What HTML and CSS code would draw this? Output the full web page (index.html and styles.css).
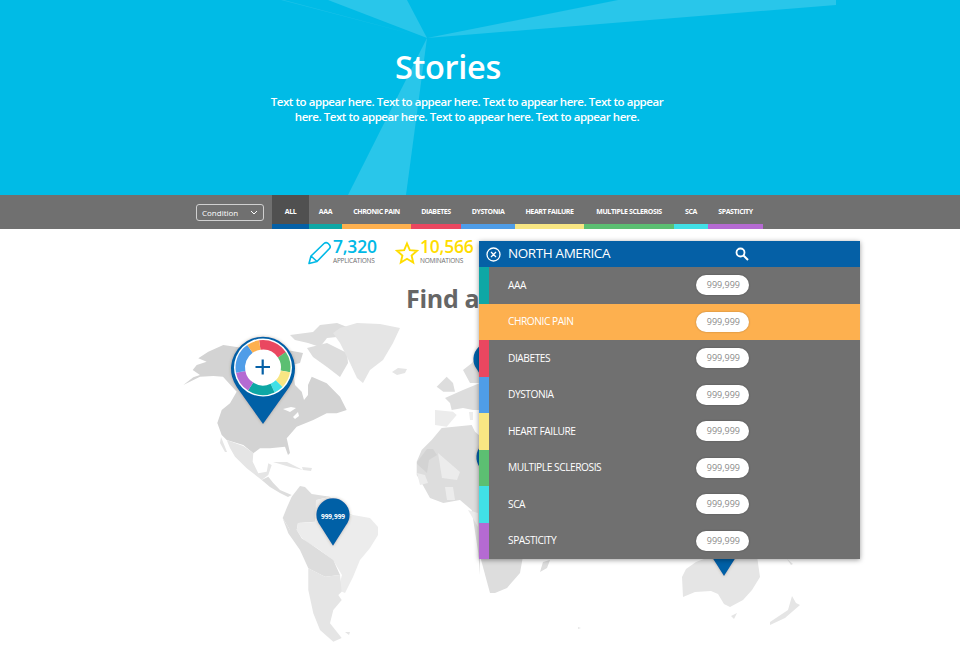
FILE: index.html
```html
<!DOCTYPE html>
<html lang="en">
<head>
<meta charset="utf-8">
<title>Stories</title>
<link rel="stylesheet" href="styles.css">
</head>
<body>
<header class="hero">
  <svg class="hero-facets" viewBox="0 0 960 195" width="960" height="195" aria-hidden="true">
    <polygon points="328,0 407,0 427,38"/>
    <polygon points="618,0 836,0 836,5 427,38"/>
    <polygon class="facet-thin" points="281,0 284,0 427,38"/>
    <polygon points="427,38 348,195 406,195"/>
  </svg>
  <div class="hero-copy">
    <h1>Stories</h1>
    <p>Text to appear here. Text to appear here. Text to appear here. Text to appear here. Text to appear here. Text to appear here. Text to appear here.</p>
  </div>
</header>

<nav class="filter-bar">
  <div class="select">
    <span>Condition</span>
    <svg width="8" height="5" viewBox="0 0 8 5"><path d="M1 1l3 3 3-3" fill="none" stroke="#fff" stroke-width="1"/></svg>
  </div>
  <ul class="tabs">
    <li class="tab tab-all">ALL</li>
    <li class="tab tab-aaa">AAA</li>
    <li class="tab tab-chronic">CHRONIC PAIN</li>
    <li class="tab tab-diabetes">DIABETES</li>
    <li class="tab tab-dystonia">DYSTONIA</li>
    <li class="tab tab-heart">HEART FAILURE</li>
    <li class="tab tab-ms">MULTIPLE SCLEROSIS</li>
    <li class="tab tab-sca">SCA</li>
    <li class="tab tab-spasticity">SPASTICITY</li>
  </ul>
</nav>

<main class="content">
  <svg class="map" viewBox="0 229 960 419" width="960" height="419" aria-hidden="true">
    <defs>
      <filter id="pinShadow" x="-30%" y="-30%" width="160%" height="160%">
        <feDropShadow dx="0" dy="0" stdDeviation="1.500" flood-color="#5a4a2a" flood-opacity=".35"/>
      </filter>
    </defs>
    <!-- North America -->
    <polygon class="land-d" points="183.300,385 193.300,377.300 200,375 192.700,370 196.700,365 206.700,361.700 198.300,358.300 208.300,351.700 223.300,345 235,346.700 260,350 285,358 293,370 295,385 301.700,391.700 304,400 308,395 308,385 311.700,376.700 326.700,383.300 340,396.700 346.700,410 336.700,413.300 326.700,413.300 313.300,420 296.700,426.700 286.700,438.300 290,453 288,455 285,446.700 270,448.300 260,448.300 253.300,453.300 243.300,445 226.700,440 221.700,435 217.300,423 221.700,410 230,403.300 236.700,391.700 223,376.700 213.300,376 200,376.700"/>
    <polygon class="map-white" points="283,409 291,407 296,408 290,412"/>
    <polygon class="map-white" points="293,417 298,412 299,416 295,419"/>
    <polygon class="land-m" points="290,335 313,332 320,325 337,323 347,327 337,337 327,338 320,347 308,343 295,340"/>
    <polygon class="land-m" points="307,348 327,343 347,353 348,363 340,377 327,367 313,357"/>
    <polygon class="land-d" points="287,350 303,353 300,363 292,365"/>
    <polygon class="land-p" points="333,333 340,328 357,323 380,324 400,328 393,343 383,360 370,370 363,383 357,378 350,363 340,343"/>
    <polygon class="land-p" points="392,372 398,368 407,369 405,373 397,375"/>
    <!-- Mexico, Central America, Caribbean -->
    <polygon class="land-p" points="226.700,440 243.300,446 253.300,453 252.700,461.700 258.300,473.300 266.700,471.700 268.300,463.300 271.700,465 268.300,475 261.700,480 246.700,468.300 235,456.700 230,448"/>
    <polygon class="land-p" points="221,437 227,452 225,452 220,443"/>
    <polygon class="land-m" points="261.700,480 268.300,476.700 273.300,483 280,490 291.700,495 288,497 280,493 270,487"/>
    <polygon class="land-p" points="273,462 287,462 297,467 303,470 290,467"/>
    <polygon class="land-p" points="302,467 312,468 311,471 303,470"/>
    <!-- South America -->
    <polygon class="land-m" points="291.700,496.700 300,486 305,487 311.700,494 330,496.700 316.700,500 315,521.700 298,523 296.700,530 290,530 282.700,518 286.700,508"/>
    <polygon class="land-l" points="296.700,530 298,523 315,522 353,515 370,518 378,527 378,535 370,548 360,560 353,577 345,593 338,590 342,575 333,560 317,548 308,543 302,538"/>
    <polygon class="land-l" points="316,500 330,497 346,512 353,515 315,522"/>
    <polygon class="land-m" points="282.700,518.300 290,530 296.700,530 301.700,538.300 316.700,548.300 333.300,560 340,575 325,576.700 308.300,568.300 300,550 288.300,533.300"/>
    <polygon class="land-p" points="308.300,568.300 325,576.700 340,575 341.700,591.700 338.300,595 341.700,600 333.300,610 330,623.300 341.700,638 333.300,641.700 320,630 313.300,613.300 308.300,590"/>
    <polygon class="land-p" points="345,632 350,632 349,635"/>
    <!-- Europe -->
    <polygon class="land-m" points="436.700,386.700 446.700,376.700 453,383 455,391.700 443.300,391.700"/>
    <polygon class="land-l" points="435,410 453,411.700 456.700,415 446.700,426.700 435,425"/>
    <polygon class="land-m" points="445,398 463,390 480,383 480,410 473,410 463,408 451.700,410 450,403"/>
    <polygon class="land-m" points="463,370 472,363 480,353 480,383 470,383"/>
    <polygon class="land-l" points="469,412 473,412 473,420 470,420"/>
    <!-- Africa -->
    <polygon class="land-m" points="416.700,461.700 421.700,450 431.700,440 441.700,428 471.700,425 475,431.700 480,436 480,575 478.300,553 471.700,510 460,500 443.300,503 430,498 421.700,483 416.700,475"/>
    <polygon class="land-d" points="417,462 427,449 433,449 437,455 429,460 427,473 417,464"/>
    <polygon class="land-l" points="438,453 460,472 457,480 442,478"/>
    <polygon class="land-l" points="417,473 425,475 428,483 420,485"/>
    <polygon class="land-l" points="445,487 453,487 455,500 447,500"/>
    <polygon class="land-l" points="468,510 478,513 478,527"/>
    <polygon class="land-m" points="480,556 490,593 495,593 507,588 520,573 523,556"/>
    <polygon class="land-m" points="540,572 543,562 550,560 547,568"/>
    <!-- Australia and Oceania -->
    <polygon class="land-p" points="682,577 686,569 696,562 712,556 757,556 760,577 752,590 743,600 730,607 724,604 718,594 711,591 695,592 683,597"/>
    <polygon class="land-p" points="731,616 737,613 734,619"/>
    <polygon class="land-p" points="792,596 796,603 800,605 785,618 770,625 770,622 788,610"/>
    <polygon class="land-p" points="787,559 793,564 791,565"/>
    <polygon class="land-p" points="578,627 581,628 578,629"/>
    <!-- Pins -->
    <g class="pin" filter="url(#pinShadow)">
      <path d="M263 424l-26-36.600a32 32 0 1 1 52 0z"/>
    </g>
    <circle class="pin-halo" cx="263" cy="367.500" r="29"/>
    <g class="donut">
      <circle class="seg-red" cx="263" cy="367.500" r="22.750" pathLength="360" stroke-dasharray="64 360" transform="rotate(-98 263 367.500)"/>
      <circle class="seg-green" cx="263" cy="367.500" r="22.750" pathLength="360" stroke-dasharray="44 360" transform="rotate(-34 263 367.500)"/>
      <circle class="seg-yellow" cx="263" cy="367.500" r="22.750" pathLength="360" stroke-dasharray="35 360" transform="rotate(10 263 367.500)"/>
      <circle class="seg-cyan" cx="263" cy="367.500" r="22.750" pathLength="360" stroke-dasharray="20 360" transform="rotate(45 263 367.500)"/>
      <circle class="seg-teal" cx="263" cy="367.500" r="22.750" pathLength="360" stroke-dasharray="58 360" transform="rotate(65 263 367.500)"/>
      <circle class="seg-purple" cx="263" cy="367.500" r="22.750" pathLength="360" stroke-dasharray="46 360" transform="rotate(123 263 367.500)"/>
      <circle class="seg-blue" cx="263" cy="367.500" r="22.750" pathLength="360" stroke-dasharray="66 360" transform="rotate(169 263 367.500)"/>
      <circle class="seg-orange" cx="263" cy="367.500" r="22.750" pathLength="360" stroke-dasharray="27 360" transform="rotate(235 263 367.500)"/>
    </g>
    <path class="plus" d="M255.500 367h14.500M262.700 359.500v15"/>
    <g class="pin" filter="url(#pinShadow)">
      <path d="M333 545.700l-13-20.500a16.600 16.600 0 1 1 26 0z"/>
      <path d="M724 576l-13-20.500a16.600 16.600 0 1 1 26 0z"/>
      <path d="M490 390l-13-20.500a16.600 16.600 0 1 1 26 0z"/>
      <path d="M493 488l-13-20.500a16.600 16.600 0 1 1 26 0z"/>
    </g>
    <text class="pin-label" x="333" y="519">999,999</text>
  </svg>

  <section class="stats">
    <div class="stat">
      <svg width="24" height="24" viewBox="0 0 24 24"><path d="M1 22.500L3 15 16 2.500q2-1.700 4-.2L21.500 4q1.500 2 0 3.500L9 20.500zM3 15l6 5.500" fill="none" stroke="#00b9e6" stroke-width="1.600" stroke-linejoin="round"/></svg>
      <div class="stat-text">
        <strong class="stat-num stat-num-blue">7,320</strong>
        <span class="stat-label">APPLICATIONS</span>
      </div>
    </div>
    <div class="stat">
      <svg width="24" height="24" viewBox="0 0 24 24"><path d="M12 2.500l2.800 6.600 7.200.7-5.400 4.700 1.600 7-6.200-3.700-6.200 3.700 1.600-7L2 9.800l7.200-.7z" fill="none" stroke="#ffdd00" stroke-width="1.900"/></svg>
      <div class="stat-text">
        <strong class="stat-num stat-num-yellow">10,566</strong>
        <span class="stat-label">NOMINATIONS</span>
      </div>
    </div>
  </section>
  <h2 class="find">Find a</h2>

  <aside class="panel">
    <div class="panel-head">
      <svg width="15" height="15" viewBox="0 0 15 15"><circle cx="7.500" cy="7.500" r="6.500" fill="none" stroke="#fff" stroke-width="1.300"/><path d="M5 5l5 5M10 5l-5 5" stroke="#fff" stroke-width="1.300"/></svg>
      <span class="panel-title">NORTH AMERICA</span>
      <svg class="panel-search" width="14" height="14" viewBox="0 0 14 14"><circle cx="5.500" cy="5.500" r="4" fill="none" stroke="#fff" stroke-width="1.800"/><path d="M8.500 8.500l4.500 4.500" stroke="#fff" stroke-width="2"/></svg>
    </div>
    <ul class="rows">
      <li class="row row-aaa"><span>AAA</span><b class="pill">999,999</b></li>
      <li class="row row-chronic"><span>CHRONIC PAIN</span><b class="pill">999,999</b></li>
      <li class="row row-diabetes"><span>DIABETES</span><b class="pill">999,999</b></li>
      <li class="row row-dystonia"><span>DYSTONIA</span><b class="pill">999,999</b></li>
      <li class="row row-heart"><span>HEART FAILURE</span><b class="pill">999,999</b></li>
      <li class="row row-ms"><span>MULTIPLE SCLEROSIS</span><b class="pill">999,999</b></li>
      <li class="row row-sca"><span>SCA</span><b class="pill">999,999</b></li>
      <li class="row row-spasticity"><span>SPASTICITY</span><b class="pill">999,999</b></li>
    </ul>
  </aside>
</main>
</body>
</html>
```
FILE: styles.css
```css
* { box-sizing: border-box; }
html, body { margin: 0; padding: 0; }
body {
  width: 960px;
  height: 648px;
  overflow: hidden;
  background: #fff;
  font-family: "Open Sans", "Noto Sans", sans-serif;
  color: #6e6e6e;
}
ul { list-style: none; margin: 0; padding: 0; }

/* Hero */
.hero {
  position: relative;
  height: 195px;
  background: #00bbe6;
  color: #fff;
  overflow: hidden;
}
.hero-facets { position: absolute; inset: 0; fill: #fff; fill-opacity: .16; }
.facet-thin { fill-opacity: .1; }
.hero-copy {
  position: relative;
  width: 400px;
  margin-left: 267px;
  padding-top: 45px;
  text-align: center;
}
.hero-copy h1 {
  margin: 0 38px 6px 0;
  font-size: 32.500px;
  line-height: 44px;
  font-weight: 600;
  letter-spacing: -.3px;
}
.hero-copy p {
  margin: 0;
  font-size: 11.500px;
  line-height: 14.500px;
  font-weight: 600;
  letter-spacing: -.45px;
}

/* Filter bar */
.filter-bar {
  display: flex;
  align-items: flex-start;
  height: 34px;
  background: #707070;
  padding: 8.500px 0 0 196px;
}
.select {
  display: flex;
  align-items: center;
  justify-content: space-between;
  width: 68px;
  height: 17px;
  padding: 0 5px;
  border: 1px solid #d0d0d0;
  border-radius: 3px;
  color: #fff;
  font-size: 8px;
}
.tabs { display: flex; height: 34px; margin: -8.500px 0 0 8px; }
.tab {
  display: flex;
  align-items: center;
  justify-content: center;
  height: 34px;
  padding-top: 3px;
  border-bottom: 5px solid;
  color: #fff;
  font-size: 7px;
  font-weight: 700;
  letter-spacing: -.4px;
  white-space: nowrap;
}
.tab-all { width: 37px; background: #505050; border-color: #0560a6; }
.tab-aaa { width: 33px; border-color: #0ea7a5; }
.tab-chronic { width: 69px; border-color: #fdb04f; }
.tab-diabetes { width: 50px; border-color: #ea4760; }
.tab-dystonia { width: 54px; border-color: #4f9de8; }
.tab-heart { width: 69px; border-color: #f8e683; }
.tab-ms { width: 90px; border-color: #5cbf72; }
.tab-sca { width: 34px; border-color: #41e0e6; }
.tab-spasticity { width: 55px; border-color: #b56ad2; }

/* Main */
.content { position: relative; height: 419px; }
.map { position: absolute; left: 0; top: 0; }
.land-d { fill: #d3d3d3; }
.land-m { fill: #dddddd; }
.land-p { fill: #e5e5e5; }
.land-l { fill: #ececec; }
.map-white { fill: #fff; }
.pin { fill: #0560a6; }
.pin-halo { fill: #fff; }
.donut circle { fill: none; stroke-width: 9.500; }
.seg-red { stroke: #ea4760; }
.seg-green { stroke: #5cbf72; }
.seg-yellow { stroke: #f8e683; }
.seg-cyan { stroke: #41e0e6; }
.seg-teal { stroke: #0ea7a5; }
.seg-purple { stroke: #b56ad2; }
.seg-blue { stroke: #4f9de8; }
.seg-orange { stroke: #fdb04f; }
.plus { fill: none; stroke: #0560a6; stroke-width: 2.200; }
.pin-label {
  fill: #fff;
  font-size: 6.500px;
  font-weight: 700;
  text-anchor: middle;
}

.stats {
  position: relative;
  display: flex;
  gap: 15px;
  padding: 12px 0 0 308px;
}
.stat { display: flex; flex: none; gap: 1px; align-items: flex-start; height: 25px; width: 72px; }
.stat svg { flex: none; }
.stat-text { display: flex; flex-direction: column; margin-top: -4px; }
.stat-num { font-size: 17.500px; line-height: 19px; font-weight: 600; letter-spacing: -.2px; }
.stat-num-blue { color: #00b9e6; }
.stat-num-yellow { color: #ffdd00; }
.stat-label { font-size: 6.500px; line-height: 9px; letter-spacing: -.22px; color: #6e6e6e; }

.find {
  position: relative;
  margin: 14px 0 0 406px;
  font-size: 25px;
  line-height: 36px;
  font-weight: 700;
  letter-spacing: -.3px;
  color: #666;
}

/* Region panel */
.panel {
  position: absolute;
  left: 479px;
  top: 12px;
  width: 381px;
  height: 318px;
  background: #707070;
  color: #fff;
  box-shadow: 0 1px 5px rgba(0, 0, 0, .4);
}
.panel-head {
  display: flex;
  align-items: center;
  height: 26px;
  padding-left: 7px;
  background: #0560a6;
}
.panel-title {
  margin: -2px 0 0 7px;
  font-size: 13.500px;
  letter-spacing: -.4px;
}
.panel-search { margin-left: 125px; margin-top: -1px; }
.rows { display: grid; grid-template-rows: repeat(8, 36.500px); }
.row {
  display: flex;
  align-items: center;
  justify-content: space-between;
  padding: 0 111px 0 19px;
  border-left: 10px solid;
  font-size: 10.200px;
  font-weight: 500;
  letter-spacing: -.45px;
}
.row span { margin-top: -1px; }
.pill {
  width: 53px;
  height: 20px;
  padding-right: 9px;
  border-radius: 10px;
  background: #fff;
  box-shadow: 0 0 2px rgba(0, 0, 0, .3);
  color: #8a8a8a;
  font-size: 9px;
  font-weight: 400;
  line-height: 20px;
  letter-spacing: 0;
  text-align: right;
}
.row-aaa { border-color: #0ea7a5; }
.row-chronic { border-color: #fdb04f; background: #fdb04f; }
.row-diabetes { border-color: #ea4760; }
.row-dystonia { border-color: #4f9de8; }
.row-heart { border-color: #f8e683; }
.row-ms { border-color: #5cbf72; }
.row-sca { border-color: #41e0e6; }
.row-spasticity { border-color: #b56ad2; }
```
